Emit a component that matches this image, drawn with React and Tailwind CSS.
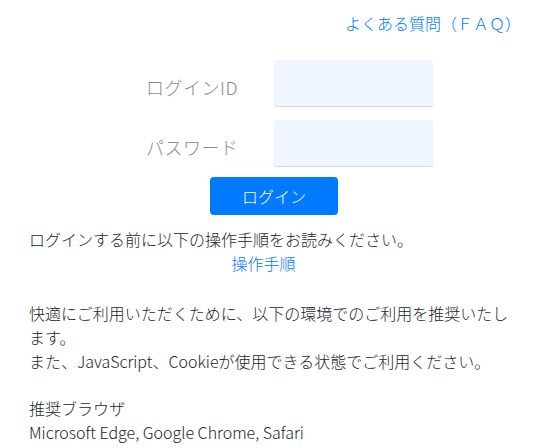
import React from 'react';

export default function App() {
  return (
    <div
      className="w-[543px] h-[448px] bg-white text-[#212529] font-light overflow-hidden"
      style={{ fontFamily: '"Noto Sans CJK JP", "Noto Sans", sans-serif' }}
    >
      <div className="flex justify-end pr-[22px] pt-[11px]">
        <a href="#" className="text-[16px] leading-[24px] text-[#007bff]">
          よくある質問（ＦＡＱ）
        </a>
      </div>

      <form className="mt-[25px]" onSubmit={e => e.preventDefault()}>
        <div className="flex items-center pl-[146px]">
          <label className="w-[128px] pt-[8px] text-[18px] tracking-[0.5px] text-[#8c8c8c]">ログインID</label>
          <input
            type="text"
            className="w-[159px] h-[46px] rounded-[3px] bg-[#eff6ff] shadow-[0_1px_1px_#d6d6d6] outline-none"
          />
        </div>
        <div className="flex items-center pl-[146px] mt-[14px]">
          <label className="w-[128px] pt-[8px] text-[18px] tracking-[0.5px] text-[#8c8c8c]">パスワード</label>
          <input
            type="password"
            className="w-[159px] h-[46px] rounded-[3px] bg-[#eff6ff] shadow-[0_1px_1px_#d6d6d6] outline-none"
          />
        </div>
        <div className="pl-[210px] mt-[11px]">
          <button
            type="submit"
            className="w-[128px] h-[38px] rounded-[4px] bg-[#007bff] text-white text-[16px]"
          >
            ログイン
          </button>
        </div>
      </form>

      <div className="px-[29px] mt-[12px] text-[16px] leading-[24px]">
        <p>ログインする前に以下の操作手順をお読みください。</p>
        <p className="text-center pr-[16px]">
          <a href="#" className="text-[#007bff]">操作手順</a>
        </p>
        <p className="mt-[26px]">
          快適にご利用いただくために、以下の環境でのご利用を推奨いたします。
          <br />
          また、JavaScript、Cookieが使用できる状態でご利用ください。
        </p>
        <p className="mt-[23px]">推奨ブラウザ</p>
        <p>Microsoft Edge, Google Chrome, Safari</p>
      </div>
    </div>
  );
}
